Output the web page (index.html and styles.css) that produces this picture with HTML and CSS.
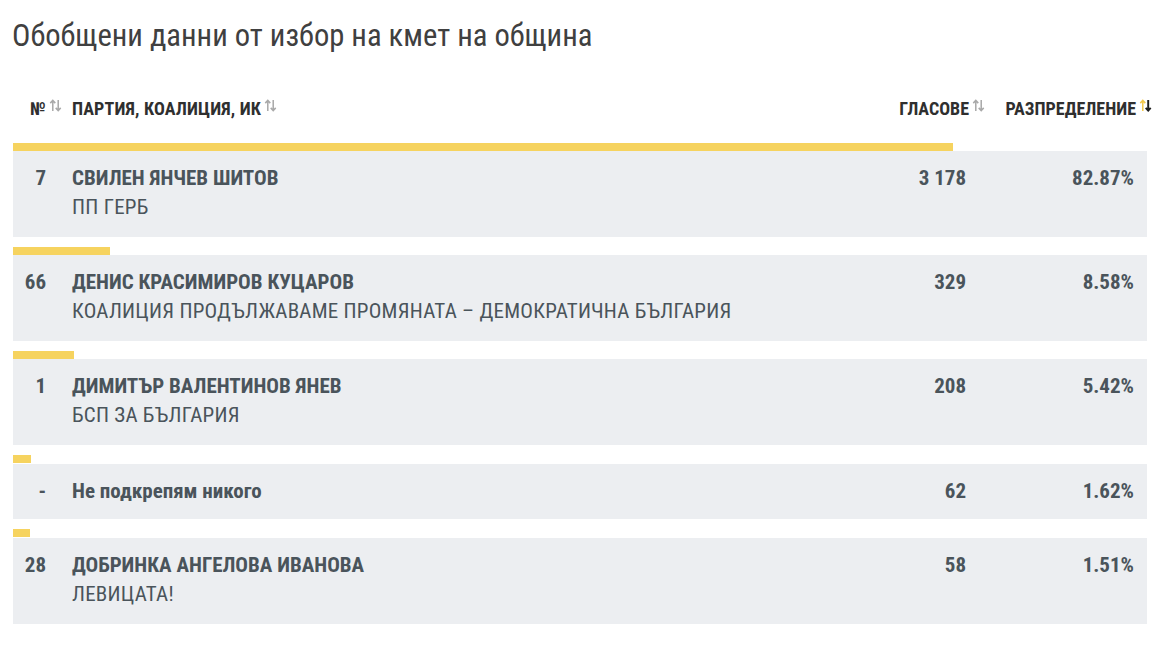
FILE: index.html
```html
<!DOCTYPE html>
<html lang="bg">
<head>
<meta charset="utf-8">
<title>Обобщени данни</title>
<link rel="stylesheet" href="styles.css">
</head>
<body>
<div class="page">
  <h1 class="title">Обобщени данни от избор на кмет на община</h1>

  <div class="thead">
    <div class="th th-num">№<svg class="sort" viewBox="0 0 12 12"><path class="up" d="M3.5 11V1.5M1.2 3.8L3.5 1.3L5.8 3.8"/><path class="down" d="M8.5 1V10.5M6.2 8.2L8.5 10.7L10.8 8.2"/></svg></div>
    <div class="th th-name">Партия, коалиция, ИК<svg class="sort" viewBox="0 0 12 12"><path class="up" d="M3.5 11V1.5M1.2 3.8L3.5 1.3L5.8 3.8"/><path class="down" d="M8.5 1V10.5M6.2 8.2L8.5 10.7L10.8 8.2"/></svg></div>
    <div class="th th-votes">Гласове<svg class="sort" viewBox="0 0 12 12"><path class="up" d="M3.5 11V1.5M1.2 3.8L3.5 1.3L5.8 3.8"/><path class="down" d="M8.5 1V10.5M6.2 8.2L8.5 10.7L10.8 8.2"/></svg></div>
    <div class="th th-pct">Разпределение<svg class="sort active" viewBox="0 0 12 12"><path class="up" d="M3.5 11V1.5M1.2 3.8L3.5 1.3L5.8 3.8"/><path class="down" d="M8.5 1V10.5M6.2 8.2L8.5 10.7L10.8 8.2"/></svg></div>
  </div>

  <div class="rows">
    <div class="item">
      <div class="bar" style="width:82.87%"></div>
      <div class="row">
        <div class="num">7</div>
        <div class="name"><div class="cand">Свилен Янчев Шитов</div><div class="party">ПП ГЕРБ</div></div>
        <div class="votes">3 178</div>
        <div class="pct">82.87%</div>
      </div>
    </div>
    <div class="item">
      <div class="bar" style="width:8.58%"></div>
      <div class="row">
        <div class="num">66</div>
        <div class="name"><div class="cand">Денис Красимиров Куцаров</div><div class="party">КОАЛИЦИЯ ПРОДЪЛЖАВАМЕ ПРОМЯНАТА – ДЕМОКРАТИЧНА БЪЛГАРИЯ</div></div>
        <div class="votes">329</div>
        <div class="pct">8.58%</div>
      </div>
    </div>
    <div class="item">
      <div class="bar" style="width:5.42%"></div>
      <div class="row">
        <div class="num">1</div>
        <div class="name"><div class="cand">Димитър Валентинов Янев</div><div class="party">БСП ЗА БЪЛГАРИЯ</div></div>
        <div class="votes">208</div>
        <div class="pct">5.42%</div>
      </div>
    </div>
    <div class="item">
      <div class="bar" style="width:1.62%"></div>
      <div class="row">
        <div class="num">-</div>
        <div class="name"><div class="cand plain">Не подкрепям никого</div></div>
        <div class="votes">62</div>
        <div class="pct">1.62%</div>
      </div>
    </div>
    <div class="item">
      <div class="bar" style="width:1.51%"></div>
      <div class="row">
        <div class="num">28</div>
        <div class="name"><div class="cand">Добринка Ангелова Иванова</div><div class="party">ЛЕВИЦАТА!</div></div>
        <div class="votes">58</div>
        <div class="pct">1.51%</div>
      </div>
    </div>
  </div>
</div>
</body>
</html>
```

FILE: styles.css
```css
* { box-sizing: border-box; }
html, body { margin: 0; padding: 0; background: #fff; }
body {
  font-family: "Roboto Condensed", "Liberation Sans Narrow", "DejaVu Sans Condensed", Roboto, sans-serif;
  color: #4a545b;
}
.page {
  padding: 18px 0 0 13px;
  width: 1152px;
}
.title {
  margin: 0 0 0 -1px;
  font-size: 30.6px;
  line-height: 36px;
  font-weight: 400;
  color: #404040;
}
.thead {
  display: flex;
  align-items: center;
  height: 36px;
  margin-top: 36px;
  margin-bottom: 17px;
  font-size: 18px;
  font-weight: 700;
  text-transform: uppercase;
  color: #2f2f2f;
  width: 1139px;
}
.th { display: flex; align-items: center; white-space: nowrap; }
.th-num { width: 59px; padding-left: 17px; }
.th-name { flex: 1; letter-spacing: 0.15px; }
.th-votes { width: 186px; justify-content: flex-end; }
.th-pct { width: 167px; justify-content: flex-end; }
.sort {
  width: 13px;
  height: 13px;
  margin-left: 3px;
  margin-top: -5px;
  fill: none;
  stroke-width: 1.4;
}
.sort .up, .sort .down { stroke: #a9a9a9; }
.sort.active .up { stroke: #f2c84b; }
.sort.active .down { stroke: #1e1e1e; stroke-width: 1.8; }

.rows { width: 1134px; }
.item { margin-bottom: 10px; }
.bar {
  height: 8px;
  background: #f6d35f;
}
.row {
  display: flex;
  align-items: flex-start;
  background: #eceef1;
  padding: 15px 13px 16px 0;
  font-size: 21px;
  line-height: 24px;
}
.item:nth-child(n+4) .row { margin-top: 1px; }
.num {
  width: 33px;
  text-align: right;
  font-weight: 700;
}
.name { flex: 1; padding-left: 26px; }
.cand { font-weight: 700; text-transform: uppercase; }
.cand.plain { text-transform: none; }
.party { margin-top: 5px; margin-bottom: 2px; font-weight: 400; letter-spacing: 0.25px; }
.votes { width: 200px; text-align: right; font-weight: 700; }
.pct { width: 168px; text-align: right; font-weight: 700; }
```
